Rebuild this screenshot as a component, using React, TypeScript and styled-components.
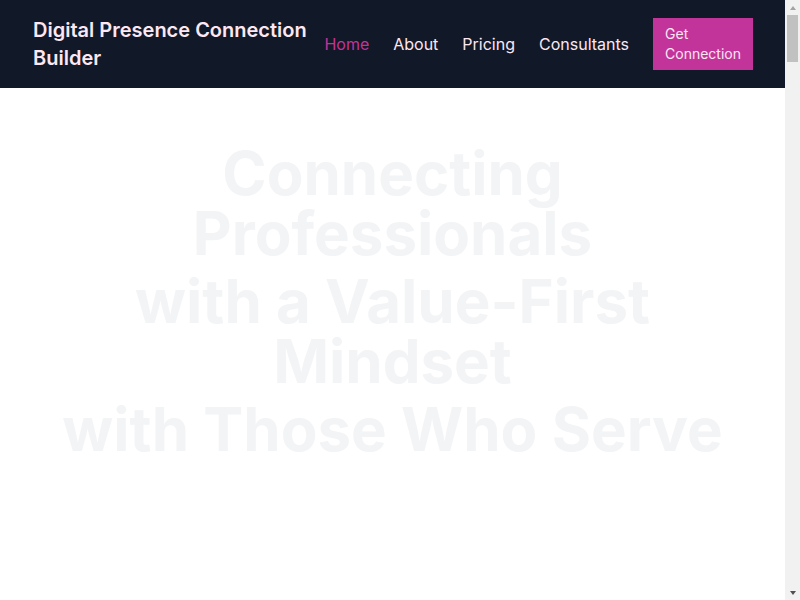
import React from "react";
import styled, { createGlobalStyle } from "styled-components";

const Global = createGlobalStyle`
  html, body { margin: 0; padding: 0; overflow: hidden; }
  body { font-family: Inter, "Noto Sans", sans-serif; background: #ffffff; }
  * { box-sizing: border-box; }
`;

const Frame = styled.div`
  display: flex;
  height: 100vh;
`;

const Scroller = styled.div`
  flex: 1 1 auto;
  min-width: 0;
  overflow-y: auto;
  scrollbar-width: none;
  &::-webkit-scrollbar { display: none; }
`;

const Rail = styled.div`
  display: flex;
  flex-direction: column;
  width: 15px;
  flex-shrink: 0;
  background: #f1f1f1;
`;

const RailButton = styled.div`
  display: flex;
  align-items: center;
  justify-content: center;
  height: 15px;
  flex-shrink: 0;
`;

const Arrow = styled.span<{ $dir: "up" | "down" }>`
  width: 0;
  height: 0;
  border-left: 3.5px solid transparent;
  border-right: 3.5px solid transparent;
  ${(p) =>
    p.$dir === "up"
      ? "border-bottom: 4px solid #a3a3a3;"
      : "border-top: 4px solid #505050;"}
`;

const RailTrack = styled.div`
  flex: 1 1 auto;
  padding: 0 2px;
`;

const Thumb = styled.div`
  height: 47px;
  background: #c1c1c1;
`;

const Header = styled.header`
  display: flex;
  align-items: center;
  justify-content: space-between;
  height: 88px;
  padding: 0 32px 0 33px;
  background: #111827;
`;

const Brand = styled.div`
  flex: 1 1 auto;
  min-width: 0;
  font-size: 20px;
  line-height: 28px;
  font-weight: 600;
  color: #fce7f3;
`;

const Nav = styled.nav`
  display: flex;
  align-items: center;
  gap: 24px;
  flex-shrink: 0;
`;

const NavLink = styled.a<{ $active?: boolean }>`
  font-size: 16px;
  line-height: 24px;
  color: ${(p) => (p.$active ? "#c2349a" : "#fce7f3")};
  text-decoration: none;
  cursor: pointer;
`;

const CtaButton = styled.button`
  width: min-content;
  padding: 6px 12px;
  border: none;
  background: #c2349a;
  color: #fce7f3;
  font-family: inherit;
  font-size: 14px;
  line-height: 20px;
  text-align: left;
  cursor: pointer;
`;

const Hero = styled.section`
  display: flex;
  justify-content: center;
  padding: 55px 24px 0;
  min-height: 1600px;
`;

const Headline = styled.h1`
  display: flex;
  flex-direction: column;
  gap: 8px;
  margin: 0;
  max-width: 700px;
  text-align: center;
  font-size: 60px;
  line-height: 60px;
  font-weight: 700;
  letter-spacing: 0;
  color: #f3f4f6;
`;

const HeadLine = styled.span`
  display: block;
`;

const Section = styled.section`
  min-height: 1864px;
  padding: 64px 32px;
`;

export default function App() {
  return (
    <Frame>
      <Global />
      <Scroller>
        <Header>
          <Brand>Digital Presence Connection Builder</Brand>
          <Nav>
            <NavLink $active>Home</NavLink>
            <NavLink>About</NavLink>
            <NavLink>Pricing</NavLink>
            <NavLink>Consultants</NavLink>
            <CtaButton>Get Connection</CtaButton>
          </Nav>
        </Header>
        <main>
          <Hero>
            <Headline>
              <HeadLine>Connecting Professionals</HeadLine>
              <HeadLine>with a Value-First Mindset</HeadLine>
              <HeadLine>with Those Who Serve</HeadLine>
            </Headline>
          </Hero>
          <Section />
          <Section />
          <Section />
        </main>
      </Scroller>
      <Rail aria-hidden>
        <RailButton>
          <Arrow $dir="up" />
        </RailButton>
        <RailTrack>
          <Thumb />
        </RailTrack>
        <RailButton>
          <Arrow $dir="down" />
        </RailButton>
      </Rail>
    </Frame>
  );
}
